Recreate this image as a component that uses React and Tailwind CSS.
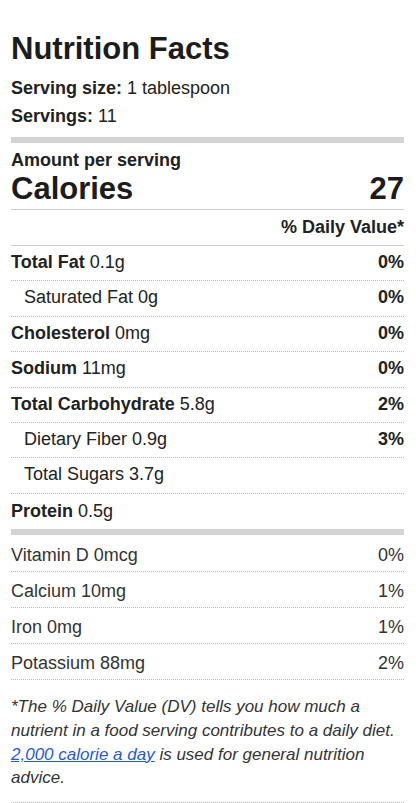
import React from "react";

const nutrients = [
  { bold: "Total Fat", amt: "0.1g", dv: "0%" },
  { label: "Saturated Fat", amt: "0g", dv: "0%", indent: true },
  { bold: "Cholesterol", amt: "0mg", dv: "0%" },
  { bold: "Sodium", amt: "11mg", dv: "0%" },
  { bold: "Total Carbohydrate", amt: "5.8g", dv: "2%" },
  { label: "Dietary Fiber", amt: "0.9g", dv: "3%", indent: true },
  { label: "Total Sugars", amt: "3.7g", dv: "", indent: true },
];

const vitamins = [
  { label: "Vitamin D 0mcg", dv: "0%" },
  { label: "Calcium 10mg", dv: "1%" },
  { label: "Iron 0mg", dv: "1%" },
  { label: "Potassium 88mg", dv: "2%" },
];

export default function App() {
  return (
    <div
      className="w-[416px] bg-white pl-[11px] pr-[12px] text-[#222]"
      style={{ fontFamily: '"Liberation Sans", Arial, Helvetica, sans-serif' }}
    >
      <h1 className="pt-[30px] text-[31px] font-bold leading-[38px] text-[#1c1c1c]">
        Nutrition Facts
      </h1>
      <div className="mt-[6px] text-[18px] leading-[28px]">
        <div>
          <span className="font-bold">Serving size:</span> 1 tablespoon
        </div>
        <div>
          <span className="font-bold">Servings:</span> 11
        </div>
      </div>
      <div className="mt-[7px] h-[6px] bg-[#d3d3d3]" />
      <div className="mt-[6px] text-[18px] font-bold leading-[22px]">
        Amount per serving
      </div>
      <div className="flex justify-between border-b border-[#cfcfcf] pb-[2px] text-[31px] font-bold leading-[36px] text-[#1c1c1c]">
        <span>Calories</span>
        <span>27</span>
      </div>
      <div className="border-b border-[#cfcfcf] pt-[3px] pb-[4px] text-right text-[18px] font-bold leading-[28px]">
        % Daily Value*
      </div>
      {nutrients.map((n, i) => (
        <div
          key={i}
          className="flex justify-between border-b border-dotted border-[#b8b8b8] pt-[3px] pb-[4px] text-[18px] leading-[27.4px]"
        >
          <span className={n.indent ? "pl-[13px]" : ""}>
            {n.bold && <span className="font-bold">{n.bold}</span>}
            {n.label}
            {" "}
            {n.amt}
          </span>
          <span className="font-bold">{n.dv}</span>
        </div>
      ))}
      <div className="pt-[3px] pb-[4px] text-[18px] leading-[28.4px]">
        <span className="font-bold">Protein</span> 0.5g
      </div>
      <div className="h-[6px] bg-[#d3d3d3]" />
      <div className="mt-[1px]">
        {vitamins.map((v, i) => (
          <div
            key={i}
            className="flex justify-between border-b border-dotted border-[#b8b8b8] pt-[5px] pb-[2px] text-[18px] leading-[28px] text-[#333]"
          >
            <span>{v.label}</span>
            <span>{v.dv}</span>
          </div>
        ))}
      </div>
      <p className="border-b border-dotted border-[#b8b8b8] pt-[15px] pb-[12px] pr-[4px] text-[17px] italic leading-[23.7px] text-[#333]">
        *The % Daily Value (DV) tells you how much a nutrient in a food serving
        contributes to a daily diet.{" "}
        <a href="#" className="text-[#1f5ad8] underline">
          2,000 calorie a day
        </a>{" "}
        is used for general nutrition advice.
      </p>
    </div>
  );
}
